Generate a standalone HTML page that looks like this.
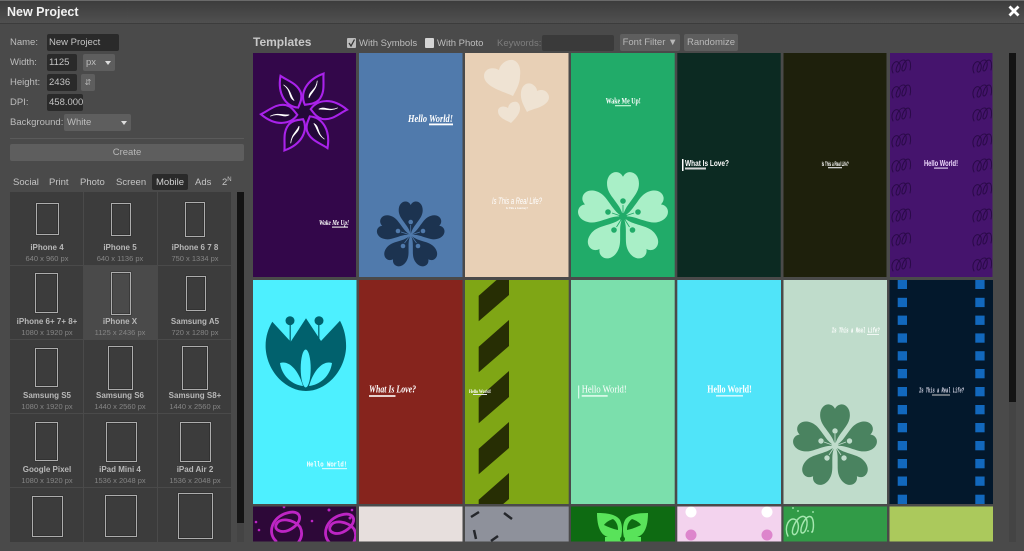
<!DOCTYPE html>
<html><head><meta charset="utf-8"><title>New Project</title>
<style>
html,body{margin:0;padding:0;width:1024px;height:551px;overflow:hidden;background:#4a4a4a}
#r{position:relative;width:1024px;height:551px;overflow:hidden;background:#4a4a4a;font-family:"Liberation Sans",sans-serif;font-size:9.5px;color:#bdbdbd;filter:blur(.35px)}
#r div{position:absolute;box-sizing:border-box;white-space:nowrap}
.tb{left:0;top:1px;width:1024px;height:23px;background:linear-gradient(#3d3d3d,#505050);border-bottom:1px solid #3c3c3c}
.l{line-height:12px}
.in{background:#2a2a2a;border-radius:2px;color:#c4c4c4;line-height:17px;padding-left:2px;overflow:hidden}
.sel{background:#5e5e5e;border-radius:2px;color:#bdbdbd;line-height:17px;padding-left:3px}
.sel i{position:absolute;right:4px;top:7px;width:0;height:0;border:3.5px solid transparent;border-top:4px solid #ddd;border-bottom:0}
.btn{background:#5e5e5e;border-radius:2px;text-align:center;line-height:18px;color:#b8b8b8}
.t{top:175px;line-height:15px;color:#c4c4c4}
.g{left:10px;top:192px;width:222px;height:350px;background:#3c3c3c;overflow:hidden}
.c{width:74px;height:74px;border-right:1px solid #4a4a4a;border-bottom:1px solid #4a4a4a}
.p{border:1.5px solid #adadad;box-shadow:inset 0 0 0 .4px #222,0 0 0 .4px #2a2a2a}
.n{width:74px;text-align:center;font-weight:bold;font-size:8px;color:#b8b8b8;line-height:10px}
.s{width:74px;text-align:center;font-size:7.5px;color:#858585;line-height:9px}
.cb{width:9px;height:10px;background:#d5d5d5;border-radius:1px}
svg.m{position:absolute;left:0;top:0}
</style></head><body>
<div id="r">
<div style="left:0;top:0;width:1024px;height:1px;background:#6a6a6a"></div>
<div class="tb"></div>
<div style="left:7px;top:5px;font-size:12.5px;line-height:15px;font-weight:bold;color:#f2f2f2">New Project</div>
<svg class="m" width="1024" height="24" style="z-index:2"><path d="M1009.500 6.500L1018.500 15.500M1018.500 6.500L1009.500 15.500" stroke="#fff" stroke-width="2.800"/></svg>

<div class="l" style="left:10px;top:37px">Name:</div>
<div class="in" style="left:47px;top:34px;width:72px;height:17px">New Project</div>
<div class="l" style="left:10px;top:57px">Width:</div>
<div class="in" style="left:47px;top:54px;width:30px;height:17px">1125</div>
<div class="sel" style="left:83px;top:54px;width:32px;height:17px">px<i></i></div>
<div class="l" style="left:10px;top:77px">Height:</div>
<div class="in" style="left:47px;top:74px;width:30px;height:17px">2436</div>
<div class="btn" style="left:81px;top:74px;width:14px;height:17px;font-size:8px">⇵</div>
<div class="l" style="left:10px;top:97px">DPI:</div>
<div class="in" style="left:47px;top:94px;width:36px;height:17px">458.000</div>
<div class="l" style="left:10px;top:117px">Background:</div>
<div class="sel" style="left:64px;top:114px;width:67px;height:17px">White<i></i></div>
<div style="left:10px;top:138px;width:234px;height:1px;background:#5a5a5a"></div>
<div class="btn" style="left:10px;top:144px;width:234px;height:17px">Create</div>

<div class="t" style="left:13px">Social</div>
<div class="t" style="left:49px">Print</div>
<div class="t" style="left:80px">Photo</div>
<div class="t" style="left:116px">Screen</div>
<div style="left:152px;top:174px;width:36px;height:16px;background:#2a2a2a;border-radius:2px"></div>
<div class="t" style="left:156px;color:#d0d0d0">Mobile</div>
<div class="t" style="left:195px">Ads</div>
<div class="t" style="left:222px">2<sup style="font-size:6px;line-height:0">N</sup></div>

<div class="g">
<div class="c" style="left:0;top:0"></div><div class="c" style="left:74px;top:0"></div><div class="c" style="left:148px;top:0"></div>
<div class="c" style="left:0;top:74px"></div><div class="c" style="left:74px;top:74px;background:#4a4a4a"></div><div class="c" style="left:148px;top:74px"></div>
<div class="c" style="left:0;top:148px"></div><div class="c" style="left:74px;top:148px"></div><div class="c" style="left:148px;top:148px"></div>
<div class="c" style="left:0;top:222px"></div><div class="c" style="left:74px;top:222px"></div><div class="c" style="left:148px;top:222px"></div>
<div class="c" style="left:0;top:296px"></div><div class="c" style="left:74px;top:296px"></div><div class="c" style="left:148px;top:296px"></div>
</div>
<div class="p" style="left:36px;top:203px;width:23px;height:32px"></div>
<div class="p" style="left:111px;top:203px;width:20px;height:33px"></div>
<div class="p" style="left:185px;top:202px;width:20px;height:35px"></div>
<div class="p" style="left:35px;top:273px;width:23px;height:40px"></div>
<div class="p" style="left:111px;top:272px;width:20px;height:43px"></div>
<div class="p" style="left:186px;top:276px;width:20px;height:35px"></div>
<div class="p" style="left:35px;top:348px;width:23px;height:39px"></div>
<div class="p" style="left:108px;top:346px;width:25px;height:44px"></div>
<div class="p" style="left:182px;top:346px;width:26px;height:44px"></div>
<div class="p" style="left:35px;top:422px;width:23px;height:39px"></div>
<div class="p" style="left:106px;top:422px;width:31px;height:40px"></div>
<div class="p" style="left:180px;top:422px;width:31px;height:40px"></div>
<div class="p" style="left:32px;top:496px;width:31px;height:41px"></div>
<div class="p" style="left:105px;top:495px;width:32px;height:42px"></div>
<div class="p" style="left:178px;top:493px;width:35px;height:46px"></div>

<div class="n" style="left:10px;top:243px">iPhone 4</div><div class="s" style="left:10px;top:254px">640 x 960 px</div>
<div class="n" style="left:83px;top:243px">iPhone 5</div><div class="s" style="left:83px;top:254px">640 x 1136 px</div>
<div class="n" style="left:158px;top:243px">iPhone 6 7 8</div><div class="s" style="left:158px;top:254px">750 x 1334 px</div>
<div class="n" style="left:10px;top:317px">iPhone 6+ 7+ 8+</div><div class="s" style="left:10px;top:328px">1080 x 1920 px</div>
<div class="n" style="left:83px;top:317px">iPhone X</div><div class="s" style="left:83px;top:328px">1125 x 2436 px</div>
<div class="n" style="left:158px;top:317px">Samsung A5</div><div class="s" style="left:158px;top:328px">720 x 1280 px</div>
<div class="n" style="left:10px;top:391px">Samsung S5</div><div class="s" style="left:10px;top:402px">1080 x 1920 px</div>
<div class="n" style="left:83px;top:391px">Samsung S6</div><div class="s" style="left:83px;top:402px">1440 x 2560 px</div>
<div class="n" style="left:158px;top:391px">Samsung S8+</div><div class="s" style="left:158px;top:402px">1440 x 2560 px</div>
<div class="n" style="left:10px;top:465px">Google Pixel</div><div class="s" style="left:10px;top:476px">1080 x 1920 px</div>
<div class="n" style="left:83px;top:465px">iPad Mini 4</div><div class="s" style="left:83px;top:476px">1536 x 2048 px</div>
<div class="n" style="left:158px;top:465px">iPad Air 2</div><div class="s" style="left:158px;top:476px">1536 x 2048 px</div>

<div style="left:237px;top:192px;width:7px;height:350px;background:#444"></div>
<div style="left:237px;top:192px;width:7px;height:331px;background:#141414"></div>

<div style="left:253px;top:35px;font-size:12px;line-height:14px;font-weight:bold;color:#c8c8c8">Templates</div>
<div class="cb" style="left:347px;top:38px;background:#bbb"></div>
<svg class="m" width="1024" height="60" style="z-index:2"><path d="M349 43L351 46L354.500 39.500" stroke="#333" stroke-width="1.300" fill="none"/></svg>
<div class="l" style="left:359px;top:38px">With Symbols</div>
<div class="cb" style="left:425px;top:38px"></div>
<div class="l" style="left:437px;top:38px">With Photo</div>
<div class="l" style="left:497px;top:38px;color:#7d7d7d">Keywords:</div>
<div style="left:542px;top:35px;width:72px;height:16px;background:#3a3a3a;border-radius:2px"></div>
<div class="btn" style="left:620px;top:34px;width:60px;height:17px">Font Filter ▼</div>
<div class="btn" style="left:684px;top:34px;width:54px;height:17px">Randomize</div>

<div style="left:1009px;top:53px;width:7px;height:489px;background:#444"></div>
<div style="left:1009px;top:53px;width:7px;height:349px;background:#141414"></div>

<svg class="m" width="1024" height="551" font-family="Liberation Serif,serif" fill="#fff">
<defs>
<path id="ht" d="M0 0C-1-6-4-9-7.500-14C-10.500-18-12-21-12-25C-12-31-8-34-4.500-33.500C-2.500-33.200-1-32 0-30C1-32 2.500-33.200 4.500-33.500C8-34 12-31 12-25C12-21 10.500-18 7.500-14C4-9 1-6 0 0Z"/>
<g id="fl">
<use href="#ht"/><use href="#ht" transform="rotate(72)"/><use href="#ht" transform="rotate(144)"/><use href="#ht" transform="rotate(216)"/><use href="#ht" transform="rotate(288)"/>
</g>
<g id="pp">
<path d="M-2-7C-11-15-11-30 3-43C6-34 12-27 9-17C7-12 3-10-2-7Z" fill="#230838" stroke="#a922ea" stroke-width="2.100"/>
<path d="M-1-15C-4-21 3-25 0-34C3-26-1-21-1-15Z" fill="#fff" stroke="#fff" stroke-width=".7"/>
</g>
<path id="sp" d="M2 16C-1 10 3 3 7 5C11 7 9 16 6 15C3 14 8 2 13 3C17 4 15 14 12 14C9 14 13 3 17 3C20 3 20 10 19 13" fill="none" stroke-width="1" stroke-linecap="round"/>
<path id="sp2" d="M14 36C5 28 10 12 25 8C38 4 42 14 32 22C22 30 12 26 14 20C17 12 32 14 38 22C42 30 38 36 34 40" fill="none" stroke-linecap="round"/>
</defs>

<!-- row 1 -->
<rect x="253" y="53" width="103" height="224" fill="#33074a"/>
<circle cx="304" cy="112" r="9" fill="#230838"/>
<g transform="translate(304 112)">
<use href="#pp" transform="rotate(23)"/><use href="#pp" transform="rotate(83)"/><use href="#pp" transform="rotate(143)"/><use href="#pp" transform="rotate(203)"/><use href="#pp" transform="rotate(263)"/><use href="#pp" transform="rotate(323)"/>
</g>
<text x="319" y="225" font-size="7" font-weight="bold" font-style="italic" textLength="30" lengthAdjust="spacingAndGlyphs">Wake Me Up!</text>
<rect x="332" y="226.500" width="16" height="1.200" fill="#ddd"/>

<rect x="359" y="53" width="103.500" height="224" fill="#507aac"/>
<text x="408" y="122" font-size="10" font-weight="bold" font-style="italic" textLength="45" lengthAdjust="spacingAndGlyphs">Hello World!</text>
<rect x="429" y="123.500" width="24" height="1.800" fill="#fff"/>
<use href="#fl" transform="translate(410.700 235)" fill="#1c3350"/>
<g fill="#507aac"><circle cx="410.700" cy="222" r="2.300"/><circle cx="398" cy="231" r="2.300"/><circle cx="423" cy="231" r="2.300"/><circle cx="403" cy="246" r="2.300"/><circle cx="418" cy="246" r="2.300"/></g>
<g stroke="#507aac" stroke-width=".7"><path d="M410.700 235V225M410.700 235L401 232M410.700 235L420 232M410.700 235L404.500 243M410.700 235L416.500 243"/></g>

<rect x="465" y="53" width="103.500" height="224" fill="#e8d0b6"/>
<g fill="#efe3d3">
<path d="M513 96C505 92 484 87 484 76C484 69 492 66 499 70C500 64 507 59 513 60C519 62 521 68 520 76C520 84 516 90 513 96Z"/>
<path d="M527 112C524 106 520 100 521 92C522 85 527 82 532 84C535 86 537 88 537 91C541 89 546 90 548 94C551 99 547 104 540 107C535 109 530 110 527 112Z"/>
<path d="M511 123C506 120 498 118 498 111C498 107 503 105 508 108C509 103 513 101 517 102C520 104 521 108 519 113C517 117 514 120 511 123Z"/>
</g>
<text x="492" y="204" font-size="9" font-style="italic" font-family="Liberation Sans,sans-serif" textLength="50" lengthAdjust="spacingAndGlyphs">Is This a Real Life?</text>
<text x="506" y="209" font-size="3.500" font-weight="bold" textLength="22" lengthAdjust="spacingAndGlyphs">Is This a Journey?</text>

<rect x="571" y="53" width="103.700" height="224" fill="#21ab69"/>
<text x="605.700" y="103.500" font-size="8" font-weight="bold" textLength="35" lengthAdjust="spacingAndGlyphs">Wake Me Up!</text>
<rect x="615" y="105" width="16" height="1.300" fill="#b5efcd"/>
<use href="#fl" transform="translate(623 216.700) scale(1.330)" fill="#a9efc7"/>
<g fill="#21ab69"><circle cx="623" cy="201" r="2.800"/><circle cx="608" cy="212" r="2.800"/><circle cx="638" cy="212" r="2.800"/><circle cx="614" cy="230" r="2.800"/><circle cx="632.500" cy="230" r="2.800"/><circle cx="623" cy="216.700" r="4"/></g>
<g stroke="#21ab69" stroke-width=".9"><path d="M623 216.700V205M623 216.700L612 213M623 216.700L634 213M623 216.700L616.500 227M623 216.700L629.500 227"/></g>

<rect x="677.300" y="53" width="103.400" height="224" fill="#0c2a22"/>
<rect x="682" y="159" width="1.500" height="12" fill="#fff"/>
<text x="685" y="166" font-size="8.500" font-weight="bold" font-family="Liberation Sans,sans-serif" textLength="44" lengthAdjust="spacingAndGlyphs">What Is Love?</text>
<rect x="685" y="167.500" width="21" height="2" fill="#d5d5d5"/>

<rect x="783.500" y="53" width="103" height="224" fill="#1e200c"/>
<text x="821.700" y="166" font-size="6.500" font-weight="bold" font-family="Liberation Sans,sans-serif" textLength="27" lengthAdjust="spacingAndGlyphs">Is This a Real Life?</text>
<rect x="828" y="167" width="14" height="1.300" fill="#ccc"/>

<rect x="890" y="53" width="102.500" height="224" fill="#45146d"/>
<svg x="890" y="53" width="103" height="224" viewBox="890 53 103 224">
<g stroke="#2a0a48">
<use href="#sp" x="891" y="57"/><use href="#sp" x="891" y="82"/><use href="#sp" x="891" y="105"/><use href="#sp" x="891" y="131"/><use href="#sp" x="891" y="156"/><use href="#sp" x="891" y="180"/><use href="#sp" x="891" y="206"/><use href="#sp" x="891" y="230"/><use href="#sp" x="891" y="255"/>
<use href="#sp" x="972" y="57"/><use href="#sp" x="972" y="82"/><use href="#sp" x="972" y="105"/><use href="#sp" x="972" y="131"/><use href="#sp" x="972" y="156"/><use href="#sp" x="972" y="180"/><use href="#sp" x="972" y="206"/><use href="#sp" x="972" y="230"/><use href="#sp" x="972" y="255"/>
</g></svg>
<text x="924" y="166" font-size="8.500" font-weight="bold" font-family="Liberation Sans,sans-serif" fill="#f0dcff" textLength="34" lengthAdjust="spacingAndGlyphs">Hello World!</text>
<rect x="934" y="167.500" width="14" height="1.200" fill="#d8c8ea"/>

<!-- row 2 -->
<rect x="253" y="280" width="103.500" height="224" fill="#4df0ff"/>
<g fill="#01616d">
<path d="M272.300 321.700L290.700 341.700L306 318.300L321 341L340 320.700C345 330 346.500 340 346 349C344 372 326 391 306 391C286 391 267.500 372 265.700 349C265 338 268 329 272.300 321.700Z"/>
<circle cx="290" cy="320.700" r="4.500"/><circle cx="319" cy="320.700" r="4.500"/>
<path d="M290.200 322V342M318.800 322V342" stroke="#01616d" stroke-width="1.200"/>
</g>
<g fill="#4df0ff">
<ellipse cx="305.700" cy="368.500" rx="5" ry="19"/>
<path d="M280 363C290 360 299 372 303 386C293 385 282 377 280 363Z"/>
<path d="M332 363C322 360 313 372 309 386C319 385 330 377 332 363Z"/>
</g>
<text x="306.700" y="466.500" font-size="7.500" font-weight="bold" font-family="Liberation Mono,monospace" textLength="40.500" lengthAdjust="spacingAndGlyphs">Hello World!</text>
<rect x="322" y="468" width="25" height="1.200" fill="#d0fbff"/>

<rect x="359" y="280" width="103.500" height="224" fill="#86241d"/>
<text x="369" y="392.500" font-size="10" font-weight="bold" font-style="italic" textLength="47" lengthAdjust="spacingAndGlyphs">What Is Love?</text>
<rect x="369" y="395" width="26.500" height="2" fill="#e6d0cd"/>

<rect x="465" y="280" width="103.700" height="224" fill="#7fa615"/>
<svg x="465" y="280" width="104" height="224" viewBox="465 280 104 224">
<g fill="#272e04">
<path d="M478.700 295.700L509 269V295L478.700 321.300Z"/>
<path d="M478.700 346.700L509 320V346L478.700 372.300Z"/>
<path d="M478.700 397.700L509 371V397L478.700 423.300Z"/>
<path d="M478.700 448.700L509 422V448L478.700 474.300Z"/>
<path d="M478.700 499.700L509 473V499L478.700 525.300Z"/>
</g></svg>
<text x="469" y="393" font-size="5" font-weight="bold" textLength="22" lengthAdjust="spacingAndGlyphs">Hello World!</text>
<rect x="473" y="394" width="14" height="1" fill="#e5e5e5"/>

<rect x="571" y="280" width="103.700" height="224" fill="#7bdfac"/>
<rect x="578.200" y="385.500" width="1" height="13" fill="#e8fff4"/>
<text x="581.700" y="392.500" font-size="10" textLength="45" lengthAdjust="spacingAndGlyphs">Hello World!</text>
<rect x="581.700" y="395" width="26" height="1.800" fill="#d5f8e6"/>

<rect x="677.300" y="280" width="103.700" height="224" fill="#50e4f9"/>
<text x="707.300" y="392.500" font-size="10" font-weight="bold" textLength="44.500" lengthAdjust="spacingAndGlyphs">Hello World!</text>
<rect x="716" y="395" width="27" height="1.600" fill="#ccf7fd"/>

<rect x="783.500" y="280" width="103.500" height="224" fill="#bfdccb"/>
<text x="831.700" y="332.500" font-size="7" font-weight="bold" font-style="italic" font-family="Liberation Mono,monospace" textLength="48" lengthAdjust="spacingAndGlyphs">Is This a Real Life?</text>
<rect x="867" y="334" width="12" height="1" fill="#f0f8f4"/>
<use href="#fl" transform="translate(835 446) scale(1.240)" fill="#4a8360"/>
<g fill="#bfdccb"><circle cx="835" cy="431" r="2.700"/><circle cx="821" cy="441" r="2.700"/><circle cx="849.500" cy="441" r="2.700"/><circle cx="827" cy="458" r="2.700"/><circle cx="844" cy="458" r="2.700"/><circle cx="835" cy="446" r="3.500"/></g>
<g stroke="#bfdccb" stroke-width=".9"><path d="M835 446V434M835 446L824 442M835 446L846 442M835 446L829 455M835 446L841 455"/></g>

<rect x="889.500" y="280" width="103.500" height="224" fill="#03182c"/>
<g fill="#1268bd">
<rect x="897.700" y="280" width="9.300" height="9"/><rect x="975.300" y="280" width="9.300" height="9"/>
<rect x="897.700" y="297.800" width="9.300" height="9.300"/><rect x="975.300" y="297.800" width="9.300" height="9.300"/>
<rect x="897.700" y="315.600" width="9.300" height="9.300"/><rect x="975.300" y="315.600" width="9.300" height="9.300"/>
<rect x="897.700" y="333.400" width="9.300" height="9.300"/><rect x="975.300" y="333.400" width="9.300" height="9.300"/>
<rect x="897.700" y="351.200" width="9.300" height="9.300"/><rect x="975.300" y="351.200" width="9.300" height="9.300"/>
<rect x="897.700" y="369" width="9.300" height="9.300"/><rect x="975.300" y="369" width="9.300" height="9.300"/>
<rect x="897.700" y="387" width="9.300" height="9.300"/><rect x="975.300" y="387" width="9.300" height="9.300"/>
<rect x="897.700" y="405" width="9.300" height="9.300"/><rect x="975.300" y="405" width="9.300" height="9.300"/>
<rect x="897.700" y="423" width="9.300" height="9.300"/><rect x="975.300" y="423" width="9.300" height="9.300"/>
<rect x="897.700" y="441" width="9.300" height="9.300"/><rect x="975.300" y="441" width="9.300" height="9.300"/>
<rect x="897.700" y="459" width="9.300" height="9.300"/><rect x="975.300" y="459" width="9.300" height="9.300"/>
<rect x="897.700" y="476.500" width="9.300" height="9.300"/><rect x="975.300" y="476.500" width="9.300" height="9.300"/>
<rect x="897.700" y="494.700" width="9.300" height="9.300"/><rect x="975.300" y="494.700" width="9.300" height="9.300"/>
</g>
<text x="919" y="392.500" font-size="7.500" font-style="italic" font-family="Liberation Mono,monospace" font-weight="bold" fill="#d8d8e8" textLength="45" lengthAdjust="spacingAndGlyphs">Is This a Real Life?</text>
<rect x="932" y="394.500" width="18" height="1" fill="#ccc"/>

<!-- row 3 -->
<svg x="253" y="506.500" width="103" height="35" viewBox="253 506.500 103 35">
<rect x="253" y="506" width="104" height="36" fill="#2d0838"/>
<g stroke="#bd25c4" stroke-width="2.800"><use href="#sp2" x="262" y="505"/><use href="#sp2" x="316" y="507"/></g>
<g fill="#bd25c4"><circle cx="256" cy="522" r="1.300"/><circle cx="259" cy="530" r="1.300"/><circle cx="284" cy="507" r="1.300"/><circle cx="352" cy="510" r="1.300"/><circle cx="350" cy="518" r="1.500"/><circle cx="312" cy="521" r="1.300"/><circle cx="329" cy="510" r="1.500"/></g>
</svg>
<rect x="359" y="506.500" width="103.500" height="35" fill="#e7dfdd"/>
<rect x="465" y="506.500" width="103.700" height="35" fill="#8e919b"/>
<g stroke="#25272c" stroke-width="2.500">
<path d="M471 517L479 512M504 513L512 519M474 530L476 539M491 541L498 536"/>
</g>
<svg x="571" y="506.500" width="104" height="35" viewBox="571 506.500 104 35">
<rect x="571" y="506" width="104" height="36" fill="#0e6b12"/>
<g fill="#59e35a">
<path d="M597 513C606 513 616 514 620 520C623 526 622 533 621 538C610 538 604 538 600 530C598 526 597 520 597 513Z"/>
<path d="M648 513C639 513 629 514 625 520C622 526 623 533 624 538C635 538 641 538 645 530C647 526 648 520 648 513Z"/>
<rect x="605" y="537" width="36" height="5"/>
</g>
<g fill="#0e6b12">
<path d="M613 519C610 520 606 522 604 525C608 527 613 529 618 530C618 526 617 522 613 519Z"/>
<path d="M632 519C635 520 639 522 641 525C637 527 632 529 627 530C627 526 628 522 632 519Z"/>
<circle cx="622.500" cy="539" r="2.500"/>
</g></svg>
<svg x="677.300" y="506.500" width="104" height="35" viewBox="677.300 506.500 104 35">
<rect x="677" y="506" width="105" height="36" fill="#f3d3ee"/>
<g fill="#fff"><circle cx="691" cy="512" r="5.500"/><circle cx="767" cy="512" r="5.500"/></g>
<g fill="#dd85cc"><circle cx="691" cy="535" r="5.500"/><circle cx="767" cy="535" r="5.500"/></g>
</svg>
<rect x="783.500" y="506.500" width="103.500" height="35" fill="#319b47"/>
<g stroke="#a6e7b0" stroke-width="1.500"><use href="#sp" transform="translate(785 512) scale(1.450 1.500)"/></g>
<g fill="#b5efbf"><circle cx="793" cy="508" r=".9"/><circle cx="798" cy="511" r=".9"/><circle cx="813" cy="512" r=".9"/><circle cx="808" cy="531" r=".9"/><circle cx="812" cy="532" r=".9"/></g>
<rect x="889.500" y="506.500" width="103.500" height="35" fill="#abc95c"/>
</svg>
</div>
</body></html>
